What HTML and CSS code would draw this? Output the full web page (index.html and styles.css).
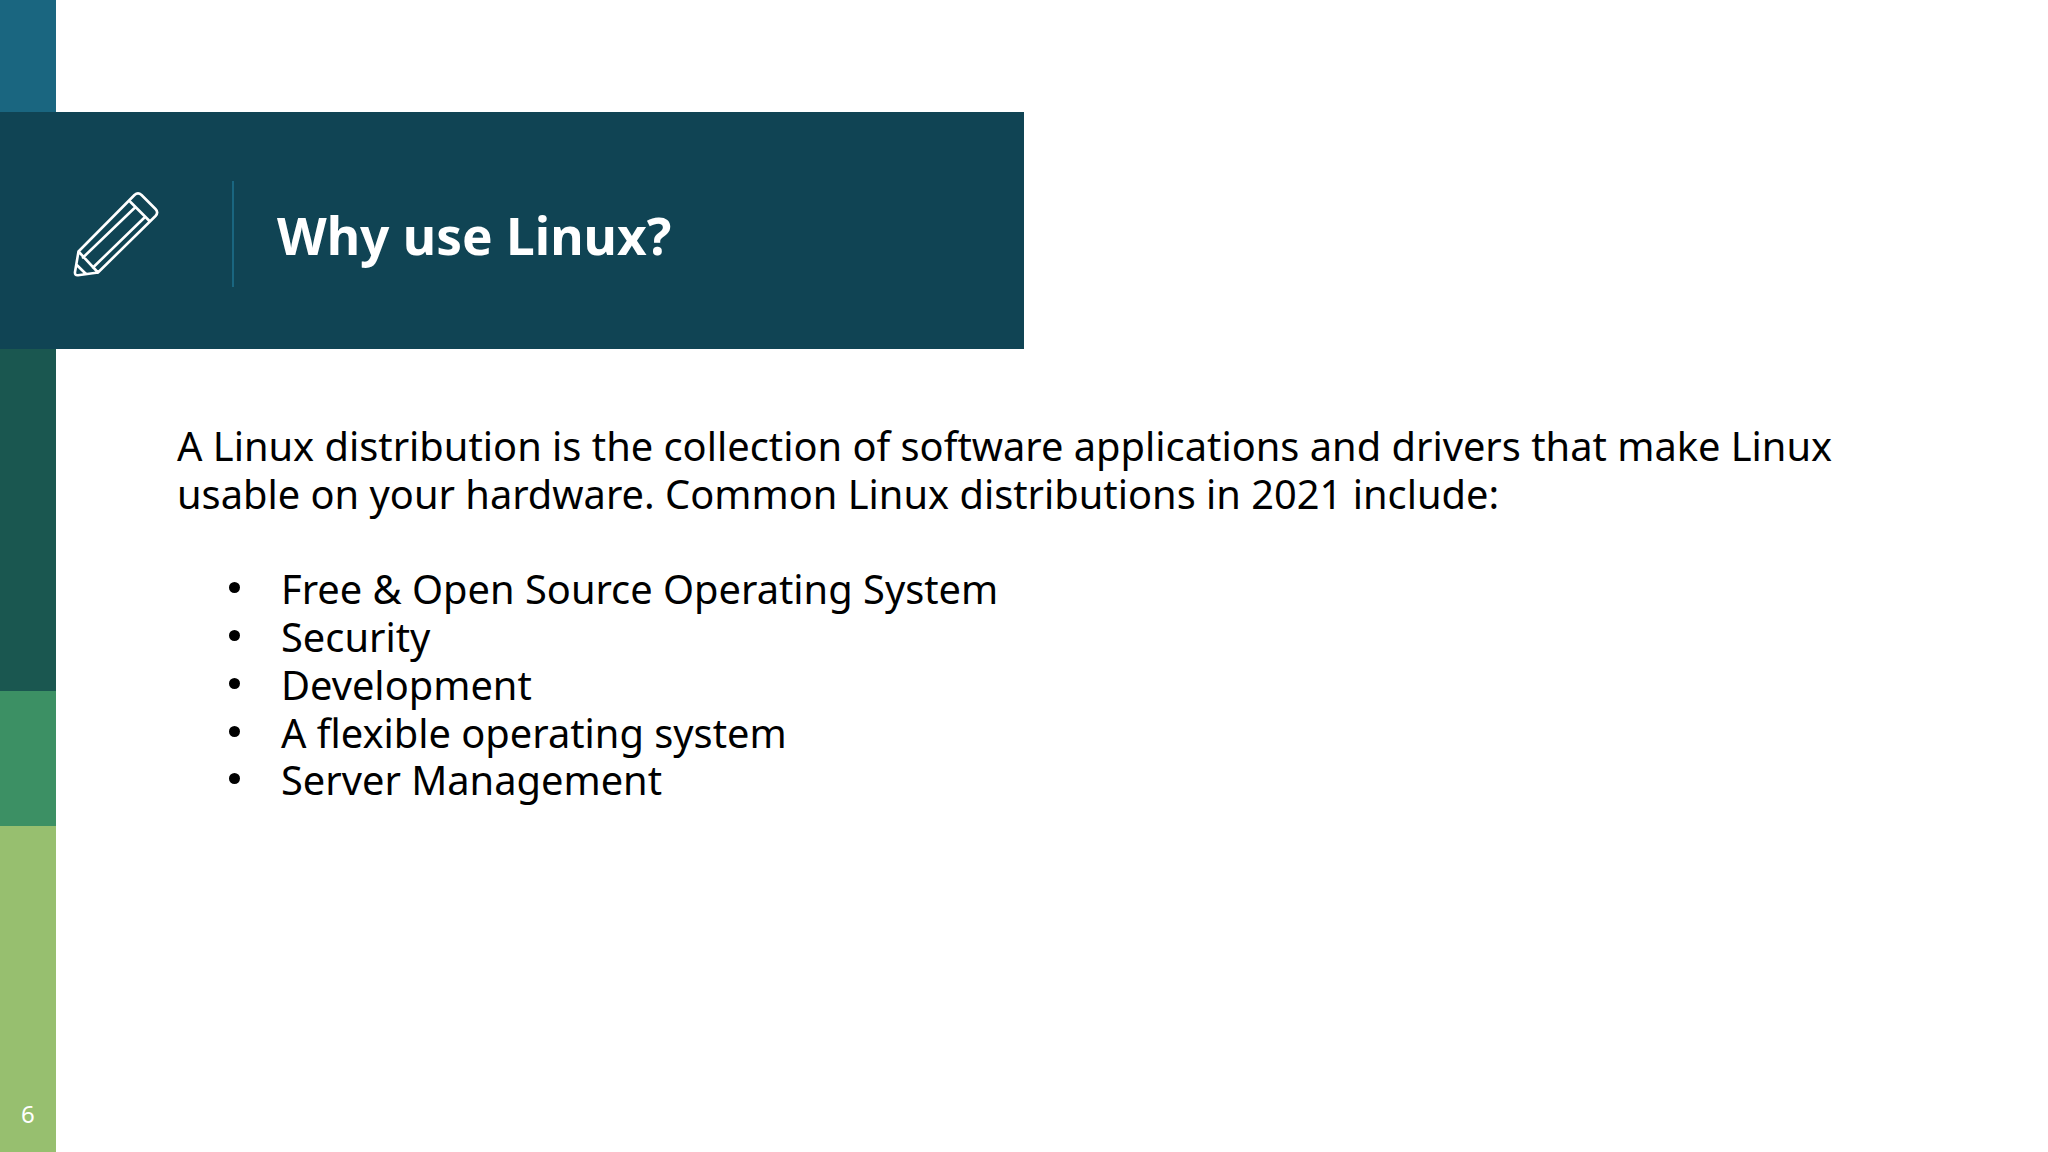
FILE: index.html
```html
<!DOCTYPE html>
<html lang="en">
<head>
<meta charset="utf-8">
<title>Why use Linux?</title>
<link rel="stylesheet" href="styles.css">
</head>
<body>
<div class="slide">
  <div class="seg seg-blue"></div>
  <header class="band">
    <svg class="pencil" viewBox="70 188 92 92" width="92" height="92" aria-hidden="true">
      <path d="M77.5 251.5 L133.5 195 Q137 191.8 140.5 195 L154.5 209 Q157.8 212.5 154.5 216 L97 272.5 L77 275.2 Q73.6 275.5 74 272 Z M77.5 251.5 L97 272.5 M129.5 202 L149 221.5 M133.5 208 L82 257.5 M143 218 L92 267.5 M75.8 265 L85 274"/>
    </svg>
    <div class="divider"></div>
    <h1 class="title">Why use Linux?</h1>
  </header>
  <div class="seg seg-dark"></div>
  <div class="seg seg-mid"></div>
  <div class="seg seg-light"><span class="page-no">6</span></div>
  <main class="content">
    <p class="intro">A Linux distribution is the collection of software applications and drivers that make Linux usable on your hardware. Common Linux distributions in 2021 include:</p>
    <ul class="points">
      <li>Free &amp; Open Source Operating System</li>
      <li>Security</li>
      <li>Development</li>
      <li>A flexible operating system</li>
      <li>Server Management</li>
    </ul>
  </main>
</div>
</body>
</html>
```
FILE: styles.css
```css
html, body {
  margin: 0;
  padding: 0;
  background: #fff;
}
.slide {
  width: 2048px;
  height: 1152px;
  display: grid;
  grid-template-columns: 55.5px 1fr;
  grid-template-rows: 112px 237px 342px 135px 326px;
  overflow: hidden;
  font-family: "Noto Sans", sans-serif;
}
.seg { grid-column: 1; }
.seg-blue { grid-row: 1; background: #1a6680; }
.seg-dark { grid-row: 3; background: #1a5750; }
.seg-mid { grid-row: 4; background: #3c9064; }
.seg-light {
  grid-row: 5;
  background: #97bf6f;
  display: flex;
  justify-content: center;
  align-items: flex-end;
}
.page-no {
  color: #fff;
  font-size: 24px;
  line-height: 32px;
  margin: 0 0 22px 0;
}
.band {
  grid-column: 1 / 3;
  grid-row: 2;
  width: 1024px;
  background: #104454;
  display: flex;
  align-items: center;
  padding: 6px 0 0 71px;
  box-sizing: border-box;
}
.pencil {
  flex: none;
  fill: none;
  stroke: #fff;
  stroke-width: 2.6;
  stroke-linejoin: round;
  stroke-linecap: round;
}
.divider {
  flex: none;
  width: 2px;
  height: 106px;
  margin-left: 68.5px;
  background: #1a6680;
}
.title {
  margin: 2px 0 0 43.5px;
  color: #fff;
  font-size: 51.4px;
  font-weight: 700;
  line-height: 72px;
}
.content {
  grid-column: 2;
  grid-row: 3 / 6;
  padding: 73px 180px 0 121.5px;
  color: #000;
  font-size: 39.8px;
  line-height: 47.7px;
}
.intro { margin: 0 0 48px 0; }
.points {
  margin: 0;
  padding: 0;
  list-style: none;
}
.points li {
  padding-left: 104px;
  position: relative;
}
.points li::before {
  content: "";
  position: absolute;
  left: 52px;
  top: 17px;
  width: 11px;
  height: 11px;
  border-radius: 50%;
  background: #000;
}
```
